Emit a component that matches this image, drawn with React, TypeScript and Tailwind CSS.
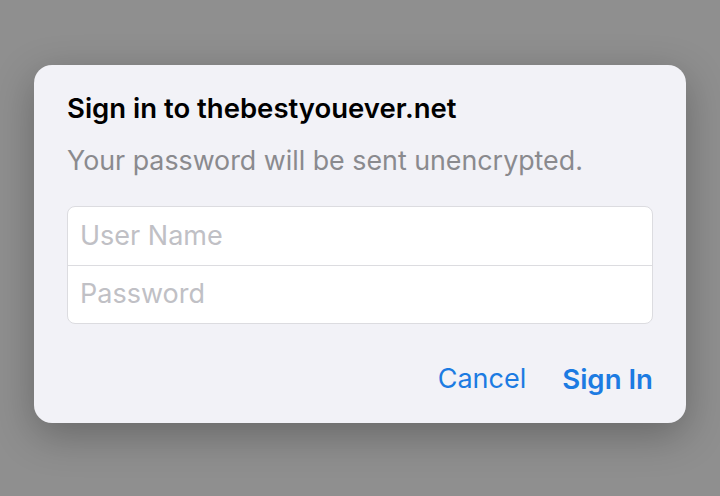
export default function App() {
  return (
    <div
      className="w-[720px] h-[496px] bg-[#8f8f8f] pt-[65px] pl-[34px]"
      style={{ fontFamily: 'Inter, "Noto Sans", sans-serif' }}
    >
      <div className="w-[652px] h-[358px] rounded-[18px] bg-[#f2f2f7] shadow-[0_12px_40px_rgba(0,0,0,0.28)] px-[33px] pt-[26px] flex flex-col">
        <div className="text-[27.5px] leading-[34px] font-semibold text-black whitespace-nowrap">
          Sign in to thebestyouever.net
        </div>
        <div className="mt-[18px] text-[26.8px] leading-[34px] text-[#8a8a8e] whitespace-nowrap">
          Your password will be sent unencrypted.
        </div>
        <div className="mt-[29px] rounded-[8px] bg-white border border-[#dcdce0] flex flex-col">
          <div className="h-[59px] flex items-center pl-[12px] text-[27px] text-[#c0c0c5] border-b border-[#dcdce0]">
            User Name
          </div>
          <div className="h-[57px] flex items-center pl-[12px] text-[27px] text-[#c0c0c5]">
            Password
          </div>
        </div>
        <div className="mt-[38px] flex justify-end items-center gap-[36px] text-[27px] leading-[34px] text-[#1c7be2]">
          <span>Cancel</span>
          <span className="font-semibold text-[27.6px]">Sign In</span>
        </div>
      </div>
    </div>
  );
}
